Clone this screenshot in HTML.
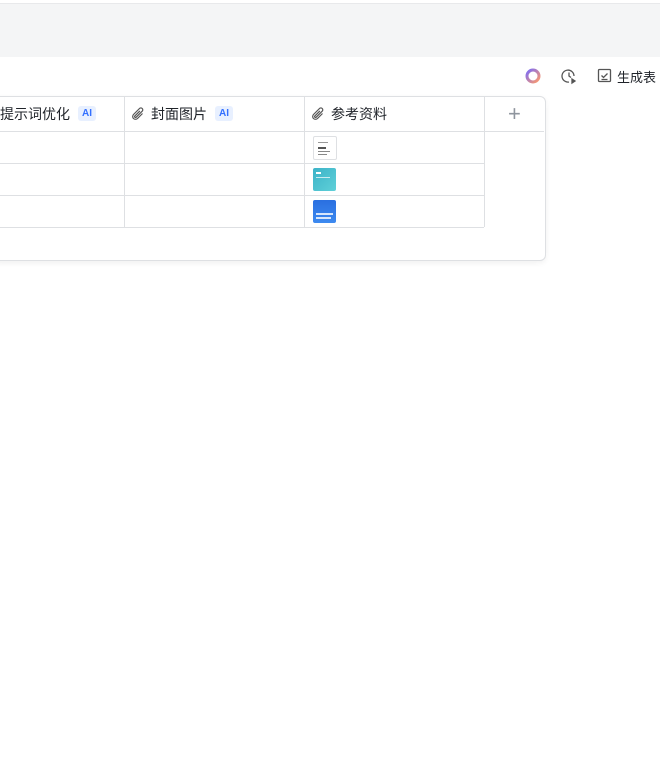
<!DOCTYPE html>
<html><head><meta charset="utf-8"><style>
body{margin:0;width:660px;height:760px;background:#fff;font-family:"Liberation Sans","Noto Sans CJK SC",sans-serif;position:relative;overflow:hidden}
.top{position:absolute;left:0;top:3px;width:660px;height:53px;background:#f4f5f6;border-top:1px solid #e8e9eb}
.tb{position:absolute;top:66px;height:20px;font-size:13px;color:#1f2329;display:flex;align-items:center}
.card{position:absolute;left:-10px;top:96px;width:554px;height:163px;border:1px solid #dee0e3;border-radius:6px;box-shadow:0 2px 6px rgba(0,0,0,.06);background:#fff}
.l{position:absolute;background:#dee0e3}
.h{position:absolute;top:96px;height:35px;display:flex;align-items:center;font-size:14px;color:#1f2329}
.ai{display:inline-block;background:#e8f0ff;color:#3370ff;font-size:10px;padding:2px 4px;border-radius:3px;margin-left:8px;font-weight:bold}
.th{position:absolute;left:313px;width:23px;height:23px;border-radius:2px;overflow:hidden}
.th i{position:absolute;display:block;background:#fff}
</style></head><body>
<div class="top"></div>
<div class="tb" style="left:524px"><svg width="18" height="18"><defs><linearGradient id="g" x1="0" y1="0" x2="1" y2="1"><stop offset="0" stop-color="#7b6cf6"/><stop offset="1" stop-color="#ff9a6a"/></linearGradient></defs><circle cx="9" cy="9" r="6" fill="none" stroke="url(#g)" stroke-width="3"/></svg></div>
<div class="tb" style="left:560px"><svg width="18" height="18" fill="none" stroke="#555" stroke-width="1.3"><path d="M14 9A6 6 0 1 0 9 15"/><path d="M9 5.5V9l2 1.5"/><path d="M12 12l3 2-3 2z" fill="#555"/></svg></div>
<div class="tb" style="left:597px"><svg width="16" height="16" fill="none" stroke="#555" stroke-width="1.3"><rect x="1.5" y="1.5" width="12" height="12" rx="1"/><path d="M4.5 7.5l2 2 4-4M4.5 11.5h6"/></svg><span style="margin-left:4px">生成表</span></div>
<div class="card"></div>
<div class="l" style="left:0;top:131px;width:484px;height:1px"></div>
<div class="l" style="left:0;top:163px;width:484px;height:1px"></div>
<div class="l" style="left:0;top:195px;width:484px;height:1px"></div>
<div class="l" style="left:0;top:227px;width:484px;height:1px"></div>
<div class="l" style="left:484px;top:131px;width:60px;height:1px"></div>
<div class="l" style="left:124px;top:96px;width:1px;height:131px"></div>
<div class="l" style="left:304px;top:96px;width:1px;height:131px"></div>
<div class="l" style="left:484px;top:96px;width:1px;height:131px"></div>
<div class="h" style="left:0">提示词优化<span class="ai">AI</span></div>
<div class="h" style="left:131px"><svg width="14" height="14" fill="none" stroke="#555" stroke-width="1.2" style="margin-right:6px"><path d="M11.5 6.5l-5 5a2.8 2.8 0 0 1-4-4l6-6a1.9 1.9 0 0 1 2.7 2.7l-6 6a.9.9 0 0 1-1.3-1.3l5-5"/></svg>封面图片<span class="ai">AI</span></div>
<div class="h" style="left:311px"><svg width="14" height="14" fill="none" stroke="#555" stroke-width="1.2" style="margin-right:6px"><path d="M11.5 6.5l-5 5a2.8 2.8 0 0 1-4-4l6-6a1.9 1.9 0 0 1 2.7 2.7l-6 6a.9.9 0 0 1-1.3-1.3l5-5"/></svg>参考资料</div>
<div class="h" style="left:508px;font-size:22px;color:#8f959e;font-weight:300">+</div>
<div class="th" style="top:136px;border:1px solid #dee0e3;width:22px;height:22px;background:#fff">
<i style="left:4px;top:5px;width:10px;height:1px;background:#999"></i><i style="left:4px;top:10px;width:8px;height:2px;background:#555"></i><i style="left:4px;top:14px;width:12px;height:1px;background:#888"></i><i style="left:4px;top:17px;width:9px;height:1px;background:#888"></i></div>
<div class="th" style="top:168px;background:linear-gradient(135deg,#3cb3c8,#5fd0d8)"><i style="left:3px;top:4px;width:5px;height:2px"></i><i style="left:3px;top:9px;width:14px;height:1px;opacity:.7"></i></div>
<div class="th" style="top:200px;background:linear-gradient(180deg,#2a6fe0,#3d8af0)"><i style="left:3px;top:13px;width:17px;height:2px;opacity:.8"></i><i style="left:3px;top:17px;width:15px;height:2px;opacity:.8"></i></div>
</body></html>
